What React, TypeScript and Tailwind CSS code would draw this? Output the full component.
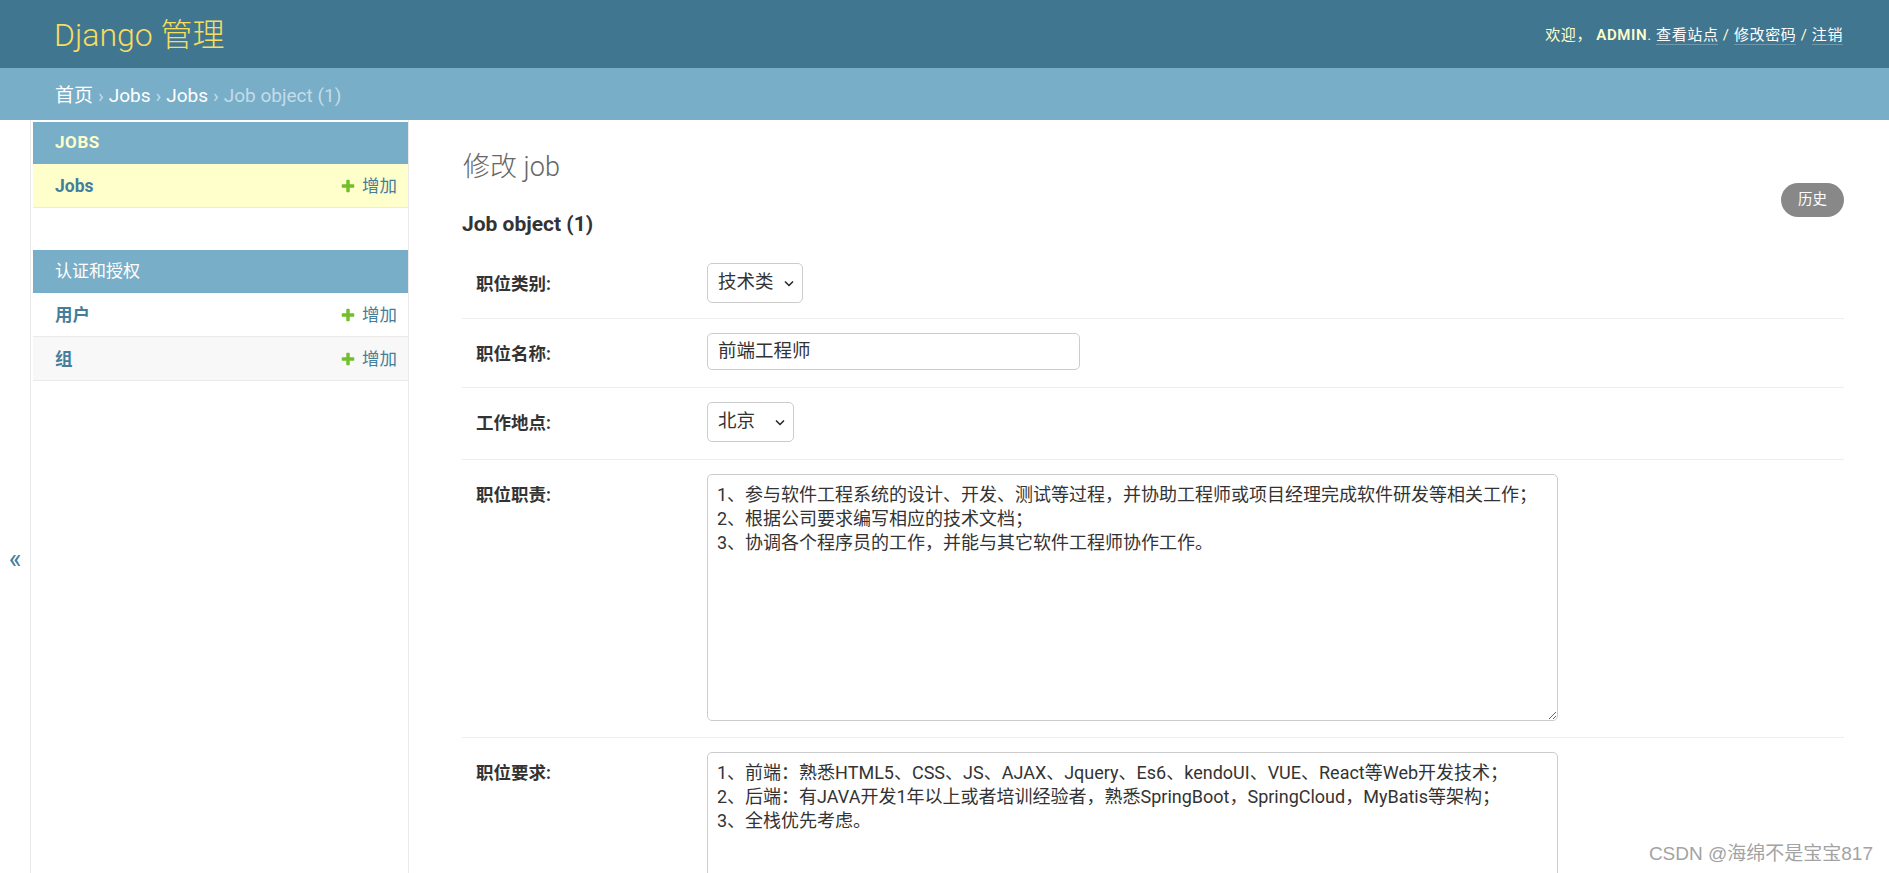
import React from 'react';

const font = "font-['Roboto','Noto_Sans_CJK_SC',sans-serif]";

const AddIcon = () => (
  <svg width="16" height="16" viewBox="0 0 1792 1792" className="shrink-0">
    <path
      fill="#70bf2b"
      d="M1600 796v192q0 40-28 68t-68 28h-416v416q0 40-28 68t-68 28h-192q-40 0-68-28t-28-68v-416h-416q-40 0-68-28t-28-68v-192q0-40 28-68t68-28h416v-416q0-40 28-68t68-28h192q40 0 68 28t28 68v416h416q40 0 68 28t28 68z"
    />
  </svg>
);

const Chevron = () => (
  <svg width="10" height="7" viewBox="0 0 10 7" className="shrink-0">
    <path d="M1 1.5l4 4 4-4" fill="none" stroke="#222" strokeWidth="1.5" />
  </svg>
);

interface ModelRowProps {
  name: string;
  bg: string;
}

const ModelRow: React.FC<ModelRowProps> = ({ name, bg }) => (
  <div className={`h-[44px] flex items-center justify-between pl-[22px] pr-[11px] pt-[1px] border-b border-[#eaeaea] ${bg}`}>
    <span className="text-[17.5px] font-bold text-[#447e9b]">{name}</span>
    <span className="flex items-center gap-[6px] text-[17.5px] text-[#447e9b]">
      <AddIcon />
      增加
    </span>
  </div>
);

const FakeSelect: React.FC<{ value: string; width: string }> = ({ value, width }) => (
  <div className={`h-[40px] ${width} flex items-center justify-between pl-[10px] pr-[8px] border border-[#ccc] rounded-[5px] bg-white text-[18.5px] text-[#333]`}>
    <span>{value}</span>
    <Chevron />
  </div>
);

const FormRow: React.FC<{ label: string; pb: string; children: React.ReactNode }> = ({ label, pb, children }) => (
  <div className={`flex items-start border-b border-[#eee] pt-[14px] ${pb}`}>
    <label className="w-[245px] shrink-0 pl-[14px] pt-[10px] leading-[22px] text-[17.5px] font-bold text-[#333]">{label}</label>
    {children}
  </div>
);

const duty = '1、参与软件工程系统的设计、开发、测试等过程，并协助工程师或项目经理完成软件研发等相关工作；\n2、根据公司要求编写相应的技术文档；\n3、协调各个程序员的工作，并能与其它软件工程师协作工作。';
const requirement = '1、前端：熟悉HTML5、CSS、JS、AJAX、Jquery、Es6、kendoUI、VUE、React等Web开发技术；\n2、后端：有JAVA开发1年以上或者培训经验者，熟悉SpringBoot，SpringCloud，MyBatis等架构；\n3、全栈优先考虑。';

const areaCls = 'w-[851px] h-[247px] resize border border-[#ccc] rounded-[5px] bg-white px-[9px] pt-[8px] text-[18px] leading-[24px] text-[#333] outline-none';

export default function App() {
  return (
    <div className={`relative w-[1889px] h-[873px] overflow-hidden bg-white ${font}`}>
      {/* header */}
      <header className="h-[68px] bg-[#417690] flex items-center justify-between pl-[54px] pr-[46px]">
        <h1 className="text-[32px] font-light text-[#f5dd5d] leading-none pt-[2px]">Django 管理</h1>
        <div className="text-[15px] tracking-[0.6px] text-[#ffc] pt-[2px]">
          欢迎， <strong className="font-semibold">ADMIN</strong>.{' '}
          <a className="text-white border-b border-white/25">查看站点</a> /{' '}
          <a className="text-white border-b border-white/25">修改密码</a> /{' '}
          <a className="text-white border-b border-white/25">注销</a>
        </div>
      </header>

      {/* breadcrumbs */}
      <div className="h-[52px] bg-[#79aec8] flex items-center pl-[55px] pt-[4px] text-[19px] text-[#c4dce8]">
        <a className="text-white">首页</a>
        <span className="mx-[5px]">›</span>
        <a className="text-white">Jobs</a>
        <span className="mx-[5px]">›</span>
        <a className="text-white">Jobs</a>
        <span className="mx-[5px]">›</span>
        <span>Job object (1)</span>
      </div>

      <div className="flex">
        {/* sidebar toggle */}
        <div className="w-[31px] h-[753px] shrink-0 border-r border-[#eaeaea] flex justify-center pt-[426px]">
          <span className="text-[27px] leading-none text-[#447e9b]">«</span>
        </div>

        {/* nav sidebar */}
        <nav className="w-[378px] h-[753px] shrink-0 border-r border-[#eaeaea] pl-[2px] pt-[2px]">
          <div className="mb-[42px]">
            <div className="h-[42px] bg-[#79aec8] flex items-center pl-[22px] text-[17px] font-bold tracking-[0.6px] text-[#ffc]">JOBS</div>
            <ModelRow name="Jobs" bg="bg-[#ffc]" />
          </div>
          <div>
            <div className="h-[43px] bg-[#79aec8] flex items-center pl-[22px] text-[17px] text-white">认证和授权</div>
            <ModelRow name="用户" bg="bg-white" />
            <ModelRow name="组" bg="bg-[#f8f8f8]" />
          </div>
        </nav>

        {/* content */}
        <main className="flex-1 pl-[53px] pr-[45px]">
          <div className="flex justify-between items-start">
            <div>
              <h1 className="pl-[1px] pt-[31px] text-[27px] leading-[33px] font-light text-[#666]">修改 job</h1>
              <h2 className="mt-[27px] text-[21px] leading-[26px] font-bold text-[#333]">Job object (1)</h2>
            </div>
            <a className="mt-[63px] h-[34px] px-[17px] flex items-center rounded-full bg-[#888] text-[14.5px] text-white">历史</a>
          </div>

          <div className="mt-[12px]">
            <FormRow label="职位类别:" pb="pb-[15px]">
              <FakeSelect value="技术类" width="w-[96px]" />
            </FormRow>
            <FormRow label="职位名称:" pb="pb-[17px]">
              <div className="w-[373px] h-[37px] flex items-center pl-[10px] border border-[#ccc] rounded-[5px] text-[18.5px] text-[#333]">前端工程师</div>
            </FormRow>
            <FormRow label="工作地点:" pb="pb-[17px]">
              <FakeSelect value="北京" width="w-[87px]" />
            </FormRow>
            <FormRow label="职位职责:" pb="pb-[16px]">
              <textarea className={areaCls} defaultValue={duty} />
            </FormRow>
            <FormRow label="职位要求:" pb="pb-[16px]">
              <textarea className={areaCls} defaultValue={requirement} />
            </FormRow>
          </div>
        </main>
      </div>

      {/* watermark */}
      <div className="absolute right-[16px] bottom-[5px] text-[19px] text-[#a3a3a3] font-['Liberation_Sans','Noto_Sans_CJK_SC',sans-serif]">
        CSDN @海绵不是宝宝817
      </div>
    </div>
  );
}
